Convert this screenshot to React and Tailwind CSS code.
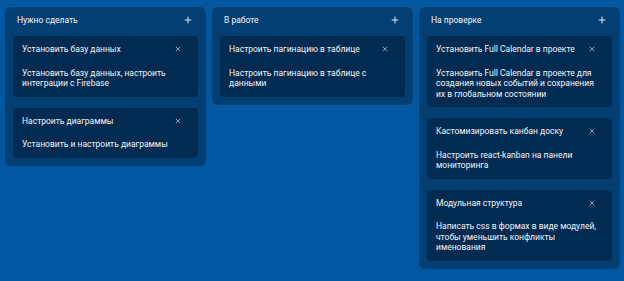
import { Plus, X } from 'lucide-react'

const columns = [
  {
    title: 'Нужно сделать',
    cards: [
      { title: 'Установить базу данных', text: 'Установить базу данных, настроить интеграции с Firebase' },
      { title: 'Настроить диаграммы', text: 'Установить и настроить диаграммы' },
    ],
  },
  {
    title: 'В работе',
    cards: [
      { title: 'Настроить пагинацию в таблице', text: 'Настроить пагинацию в таблице с данными' },
    ],
  },
  {
    title: 'На проверке',
    cards: [
      {
        title: 'Установить Full Calendar в проекте',
        text: 'Установить Full Calendar в проекте для создания новых событий и сохранения их в глобальном состоянии',
      },
      { title: 'Кастомизировать канбан доску', text: 'Настроить react-kanban на панели мониторинга' },
      { title: 'Модульная структура', text: 'Написать css в формах в виде модулей, чтобы уменьшить конфликты именования' },
    ],
  },
]

function Card({ card }) {
  return (
    <div className="bg-[#022b51] rounded-[4px] px-[9px] pt-[8px] pb-[8px]">
      <div className="flex items-center justify-between h-[10.5px]">
        <span className="text-[#f0f5fa] whitespace-nowrap">{card.title}</span>
        <X size={8} strokeWidth={2.5} className="shrink-0 text-[#a3b7cc] mr-[7px]" />
      </div>
      <p className="mt-[13px] pr-[6px] text-[#f0f5fa]">{card.text}</p>
    </div>
  )
}

export default function App() {
  return (
    <div
      className="w-[624px] h-[281px] bg-[#0157a0] flex items-start gap-[6px] pl-[5px] pt-[7px] text-[8.5px] leading-[10.5px]"
      style={{ fontFamily: 'Roboto, "Liberation Sans", sans-serif' }}
    >
      {columns.map(col => (
        <div key={col.title} className="w-[201px] bg-[#043f74] rounded-[6px] px-[8px] pt-[7px] pb-[8px]">
          {/* header */}
          <div className="flex items-center justify-between pl-[4px] pr-[5px] h-[12px] mb-[10px]">
            <span className="text-[#f3f7fb]">{col.title}</span>
            <Plus size={10} strokeWidth={2.5} className="text-[#dfe8f2]" />
          </div>

          <div className="flex flex-col gap-[11px]">
            {col.cards.map(card => <Card key={card.title} card={card} />)}
          </div>
        </div>
      ))}
    </div>
  )
}
